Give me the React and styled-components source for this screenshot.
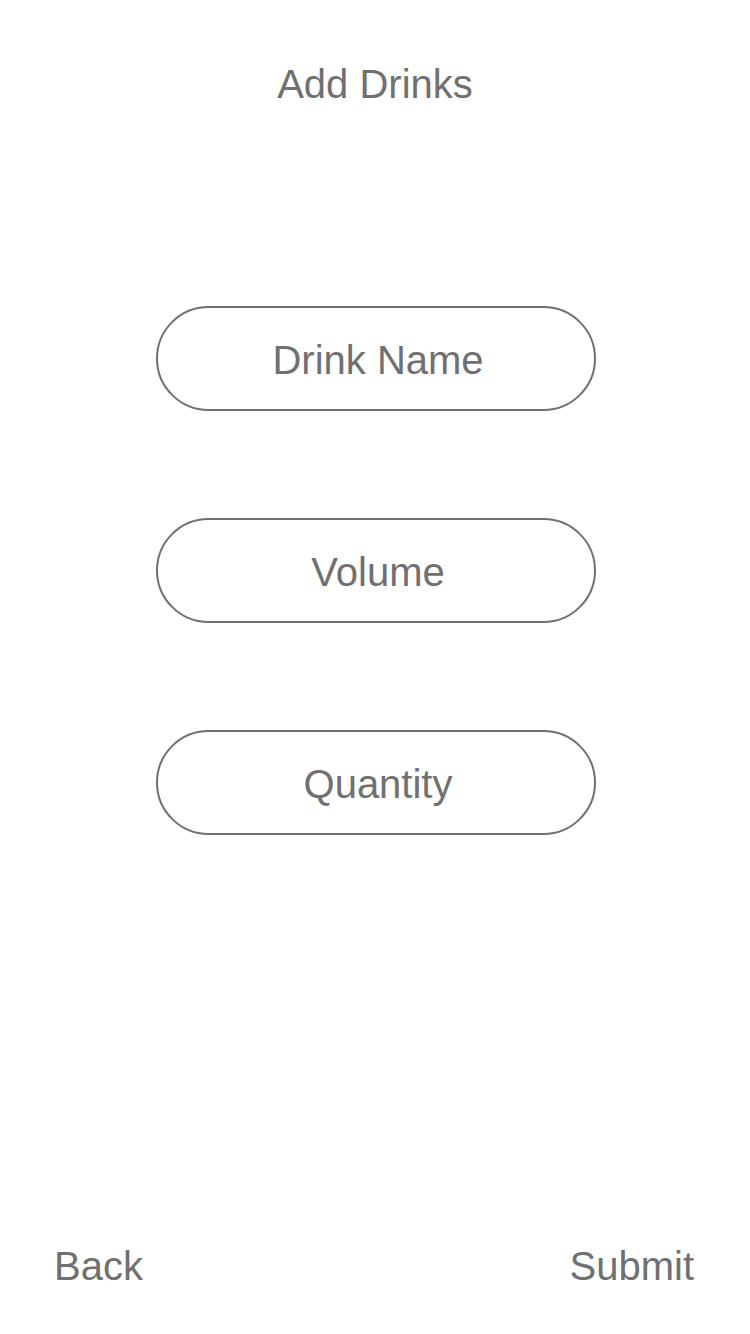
import React from "react";
import styled, { createGlobalStyle } from "styled-components";

const GlobalStyle = createGlobalStyle`
  html, body { margin: 0; padding: 0; background: #ffffff; }
  body { font-family: "Liberation Sans", Arial, Helvetica, sans-serif; }
  * { box-sizing: border-box; }
`;

const Screen = styled.div`
  width: 750px;
  min-height: 1334px;
  display: flex;
  flex-direction: column;
  align-items: center;
  background: #ffffff;
  color: #707070;
`;

const Title = styled.h1`
  margin: 0;
  padding-top: 61px;
  font-size: 40px;
  font-weight: 400;
  line-height: 46px;
  text-align: center;
`;

const Form = styled.div`
  margin-top: 199px;
  margin-left: 2px;
  display: flex;
  flex-direction: column;
  gap: 107px;
`;

const Pill = styled.div`
  width: 440px;
  height: 105px;
  border: 2px solid #707070;
  border-radius: 53px;
  display: flex;
  align-items: center;
  justify-content: center;
  font-size: 40px;
  line-height: 46px;
  padding-top: 2px;
  padding-left: ${(p) => p.$shift || 0}px;
`;

const Footer = styled.div`
  margin-top: auto;
  width: 100%;
  display: flex;
  justify-content: space-between;
  padding: 0 56px 45px 54px;
`;

const FooterButton = styled.span`
  font-size: 40px;
  line-height: 46px;
`;

export default function App() {
  return (
    <Screen>
      <GlobalStyle />
      <Title>Add Drinks</Title>
      <Form>
        <Pill $shift={4}>Drink Name</Pill>
        <Pill $shift={4}>Volume</Pill>
        <Pill $shift={4}>Quantity</Pill>
      </Form>
      <Footer>
        <FooterButton>Back</FooterButton>
        <FooterButton>Submit</FooterButton>
      </Footer>
    </Screen>
  );
}
